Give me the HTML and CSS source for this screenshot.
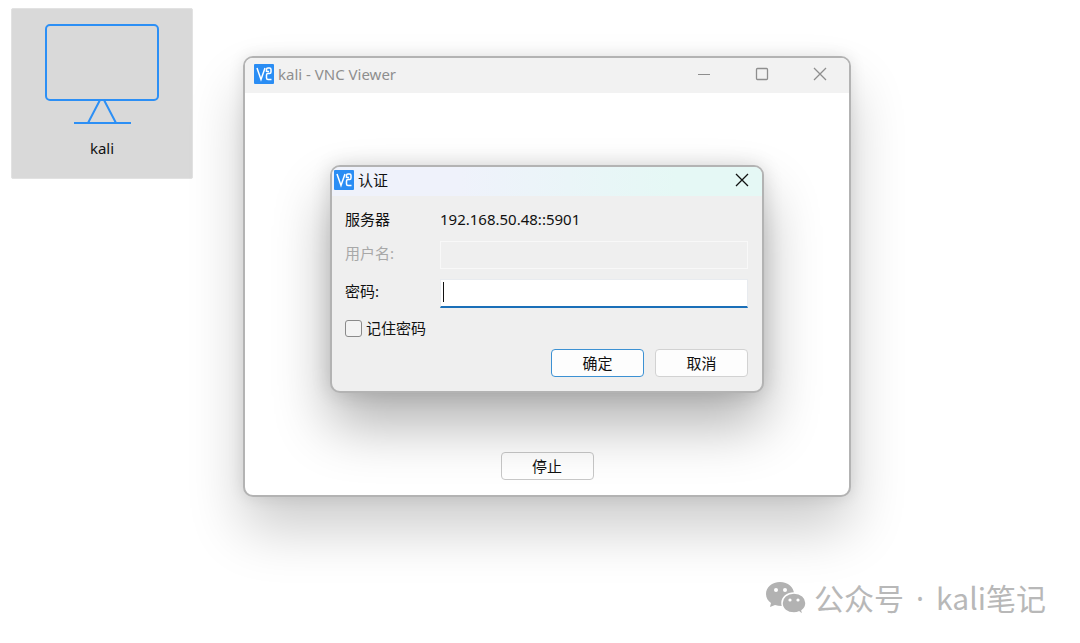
FILE: index.html
```html
<!DOCTYPE html>
<html lang="zh-CN">
<head>
  <meta charset="UTF-8">
  <meta name="viewport" content="width=device-width, initial-scale=1.0">
  <title>VNC Viewer</title>
  <link rel="stylesheet" href="styles.css">
</head>
<body>
  <svg class="symbols" aria-hidden="true">
    <symbol id="vnc-logo" viewBox="0 0 20 20">
      <rect width="20" height="20" rx="1" fill="#2a8df4"/>
      <path d="M3 4L7 15.500L11 4M12.500 8V5.500Q12.500 4 14 4H15.500Q17 4 17 5.500V8Q17 9.500 15.500 9.500H14Q12.500 9.500 12.500 11V14Q12.500 15.500 14 15.500H17.500M12.500 7.500H15" fill="none" stroke="#fff" stroke-width="1.500"/>
    </symbol>
    <symbol id="close" viewBox="0 0 14 14">
      <path d="M1 1L13 13M13 1L1 13" fill="none" stroke="currentColor" stroke-width="1.300"/>
    </symbol>
  </svg>

  <main class="desktop">
    <a class="connection" href="#kali">
      <svg class="monitor" viewBox="0 0 114 102" aria-hidden="true">
        <rect x="1" y="1" width="112" height="75" rx="4"/>
        <path d="M55 76L43 99M59 76L71 99M29 99H86"/>
      </svg>
      <span>kali</span>
    </a>

    <section class="window viewer">
      <header class="titlebar">
        <svg class="logo" aria-hidden="true"><use href="#vnc-logo"/></svg>
        <h1>kali - VNC Viewer</h1>
        <div class="controls">
          <button type="button" aria-label="最小化"><svg viewBox="0 0 14 14"><path d="M1 7.500H13" fill="none" stroke="currentColor"/></svg></button>
          <button type="button" aria-label="最大化"><svg viewBox="0 0 14 14"><rect x="1.500" y="1.500" width="11" height="11" rx="1" fill="none" stroke="currentColor" stroke-width="1.300"/></svg></button>
          <button type="button" aria-label="关闭"><svg><use href="#close"/></svg></button>
        </div>
      </header>
      <div class="viewer-body">
        <button type="button" class="btn btn-stop">停止</button>
      </div>
    </section>

    <section class="window dialog" role="dialog" aria-labelledby="auth-title">
      <header class="titlebar">
        <svg class="logo" aria-hidden="true"><use href="#vnc-logo"/></svg>
        <h2 id="auth-title">认证</h2>
        <button type="button" class="close" aria-label="关闭"><svg><use href="#close"/></svg></button>
      </header>
      <form class="auth-form">
        <div class="row">
          <span>服务器</span>
          <span>192.168.50.48::5901</span>
        </div>
        <div class="row disabled">
          <label for="username">用户名:</label>
          <input type="text" id="username" disabled>
        </div>
        <div class="row">
          <label for="password">密码:</label>
          <div class="field">
            <input type="password" id="password">
            <span class="caret"></span>
          </div>
        </div>
        <div class="remember">
          <input type="checkbox" id="remember">
          <label for="remember">记住密码</label>
        </div>
        <div class="actions">
          <button type="button" class="btn btn-primary">确定</button>
          <button type="button" class="btn">取消</button>
        </div>
      </form>
    </section>

    <footer class="watermark">
      <svg viewBox="0 0 42 34" aria-hidden="true">
        <path d="M15 1C7 1 1 6 1 13C1 17 3 20 6 22L5 26L10 24Q13 25 17 25C24 25 29 19.500 29 13C29 6 23 1 15 1Z"/>
        <path d="M29 12C22 12 17 16.500 17 22C17 28 22 32 29 32Q32 32 34 31L38 34L37 29.500C40 27.500 41 25 41 22C41 16.500 36 12 29 12Z" stroke="#fff" stroke-width="1.500"/>
        <g fill="#fff"><circle cx="11" cy="9" r="2"/><circle cx="20" cy="9" r="2"/><circle cx="25" cy="19" r="1.600"/><circle cx="33" cy="19" r="1.600"/></g>
      </svg>
      <span>公众号<span class="dot">·</span>kali笔记</span>
    </footer>
  </main>
</body>
</html>
```

FILE: styles.css
```css
* {
  box-sizing: border-box;
}
body {
  margin: 0;
  font-family: "Noto Sans", "Noto Sans CJK SC", sans-serif;
  font-size: 15px;
  line-height: 20px;
  color: #111;
  background-color: #fff;
}
button, input {
  font: inherit;
  color: inherit;
}
.symbols {
  position: absolute;
  width: 0;
  height: 0;
}
.desktop {
  position: relative;
  min-height: 100vh;
  overflow: hidden;
}

/* saved connection */
.connection {
  position: absolute;
  left: 11px;
  top: 8px;
  width: 182px;
  height: 171px;
  padding-top: 15px;
  display: flex;
  flex-direction: column;
  align-items: center;
  gap: 12px;
  border: 1px solid #e2e2e2;
  border-radius: 2px;
  background-color: #d9d9d9;
  color: #111;
  text-decoration: none;
}
.monitor {
  width: 114px;
  height: 102px;
  fill: none;
  stroke: #2c8ff5;
  stroke-width: 2;
  flex: none;
}

/* windows */
.window {
  position: absolute;
  border: 2px solid #b3b3b3;
  border-radius: 10px;
}
.titlebar {
  display: flex;
  align-items: center;
  border-radius: 8px 8px 0 0;
}
.titlebar h1, .titlebar h2 {
  margin: 0;
  font-size: 15px;
  font-weight: normal;
}
.titlebar button {
  display: flex;
  align-items: center;
  justify-content: center;
  padding: 0;
  border: none;
  background: none;
}
.titlebar button svg {
  width: 14px;
  height: 14px;
}
.titlebar .logo {
  width: 20px;
  height: 20px;
  margin-right: 4px;
}
.viewer {
  left: 243px;
  right: 229px;
  top: 56px;
  background-color: #fff;
  box-shadow: 0 32px 56px rgba(0, 0, 0, 0.2), 0 0 16px rgba(0, 0, 0, 0.1);
}
.viewer .titlebar {
  height: 35px;
  padding: 0 0 3px 9px;
  background-color: #f2f2f2;
  color: #8e8e8e;
}
.controls {
  display: flex;
  margin-left: auto;
}
.controls button {
  width: 58px;
  height: 32px;
}
.viewer-body {
  display: flex;
  flex-direction: column;
  justify-content: flex-end;
  align-items: center;
  min-height: 402px;
  padding-bottom: 15px;
}

/* authentication dialog */
.dialog {
  left: 330px;
  right: 316px;
  top: 165px;
  background-color: #efefef;
  box-shadow: 0 32px 56px rgba(0, 0, 0, 0.3), 0 0 20px rgba(0, 0, 0, 0.14);
}
.dialog .titlebar {
  height: 29px;
  padding: 0 0 3px 2px;
  background: linear-gradient(90deg, #eff2fb 30%, #e5f8f5 80%);
}
.titlebar .close {
  width: 40px;
  height: 26px;
  margin-left: auto;
}
.auth-form {
  display: flex;
  flex-direction: column;
  gap: 10px;
  padding: 13px 14px 14px 13px;
}
.row {
  display: grid;
  grid-template-columns: 95px 1fr;
  align-items: start;
  min-height: 22px;
}
.row label {
  line-height: 24px;
}
.row input {
  display: block;
  width: 100%;
  height: 28px;
  padding: 0 4px;
  border: 1px solid #f8f8f8;
  border-radius: 0;
  background-color: #efefef;
  outline: none;
}
.disabled {
  color: #a8a8a8;
}
.field {
  position: relative;
}
.field input {
  height: 29px;
  border: 1px solid #e8ebef;
  border-bottom: 2px solid #1a6fb8;
  background-color: #fff;
}
.caret {
  position: absolute;
  left: 3px;
  top: 3px;
  width: 1px;
  height: 20px;
  background-color: #111;
}
.remember {
  display: flex;
  align-items: center;
  gap: 4px;
}
.remember input {
  appearance: none;
  width: 17px;
  height: 17px;
  margin: 0;
  border: 1px solid #8a8a8a;
  border-radius: 3px;
  background-color: #f3f3f3;
}
.actions {
  display: flex;
  justify-content: flex-end;
  gap: 11px;
  padding-top: 1px;
}
.btn {
  width: 93px;
  height: 28px;
  padding: 0 0 1px;
  border: 1px solid #d2d2d2;
  border-radius: 4px;
  background-color: #fdfdfd;
}
.btn-primary {
  border-color: #3c91d3;
}
.btn-stop {
  background: none;
  border-color: #c8c8c8;
}

.watermark {
  position: absolute;
  right: 34px;
  bottom: 22px;
  display: flex;
  align-items: center;
  gap: 7px;
  font-family: "Noto Sans CJK SC", sans-serif;
  font-size: 30px;
  line-height: 44px;
  color: #b8b8b8;
}
.watermark svg {
  width: 42px;
  height: 34px;
  fill: #b2b2b2;
}
.dot {
  margin: 0 12px;
  font-family: "Noto Sans", sans-serif;
}
```
